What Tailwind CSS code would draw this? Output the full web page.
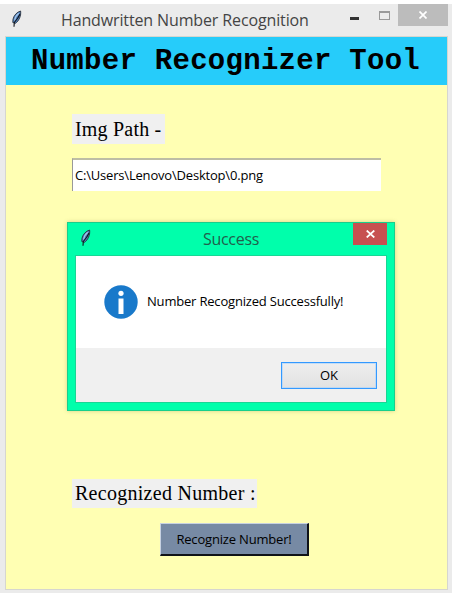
<!DOCTYPE html>
<html lang="en">
<head>
<meta charset="utf-8">
<title>Handwritten Number Recognition</title>
<script src="https://cdn.jsdelivr.net/npm/@tailwindcss/browser@4"></script>
</head>
<body class="h-[593px] w-[452px] overflow-hidden bg-white pt-1 font-['Open_Sans','Noto_Sans',sans-serif]">
<svg class="hidden">
  <symbol id="feather" viewBox="0 0 12 18">
    <path d="M9.600 1C6 2 2.800 5.500 2 9.200L1.800 12.500 4.500 13.300C7.800 11 10.300 6 9.600 1Z" fill="#4f80bd" stroke="#29303b" stroke-width=".9"/>
    <path d="M7.800 3.200C5.500 5 4 7.800 3.600 10.500" fill="none" stroke="#a5c6ea" stroke-width="1.200"/>
    <path d="M9 4C7.500 7.500 5.500 10 3.300 12.500L3 16.800" fill="none" stroke="#101319" stroke-width="1.100"/>
  </symbol>
</svg>
<main class="relative flex h-[589px] flex-col bg-[#ebebeb] pr-[5px] pb-1 pl-[6px]">
  <header class="flex h-[33px] shrink-0 items-start">
    <svg class="mt-[6px] ml-[5px] h-[18px] w-3"><use href="#feather"/></svg>
    <h1 class="mt-1 ml-[38px] w-[248px] text-[16px] leading-6 tracking-[-0.130px] whitespace-nowrap text-[#444]">Handwritten Number Recognition</h1>
    <span class="mt-[13px] ml-[41px] h-[3px] w-[9px] bg-[#333]"></span>
    <span class="mt-[7px] ml-[20px] h-[9px] w-[11px] border border-t-2 border-[#999]"></span>
    <button class="-mr-px ml-auto flex h-[22px] w-[50px] items-center justify-center bg-[#bcbcbc]">
      <svg class="h-2 w-2" viewBox="0 0 8 8"><path d="M.5.5l7 7m0-7l-7 7" stroke="#fff" stroke-width="1.700"/></svg>
    </button>
  </header>
  <section class="flex min-h-0 grow flex-col bg-[#ffffb3] shadow-[0_0_0_1px_#d6d6cf]">
    <h2 class="h-[48px] shrink-0 bg-[#26ccfa] pt-px pl-[25px] font-['Courier_New','Liberation_Mono',monospace] text-[29px] leading-[48px] font-bold tracking-[0.280px] whitespace-nowrap text-black">Number Recognizer Tool</h2>
    <div class="flex flex-col items-start pl-[66px]">
      <label class="mt-[29px] h-[30px] w-[93px] bg-[#f0f0f0] pl-[3px] font-['Liberation_Serif',serif] text-[20px] leading-[30px] tracking-[0.200px] whitespace-nowrap">Img Path -</label>
      <div class="mt-[14px] h-[33px] w-[309px] border-t-2 border-l border-t-[#bdbda5] border-l-[#999] bg-white pl-[2px] text-[13px] leading-[30px] tracking-[-0.190px] whitespace-nowrap"><span>C:\Users\Lenovo\Desktop\0.png</span></div>
      <label class="mt-[288px] h-[29px] w-[185px] bg-[#f0f0f0] pl-[3px] font-['Liberation_Serif',serif] text-[20px] leading-[29px] tracking-[0.280px] whitespace-nowrap">Recognized Number :</label>
      <button class="mt-[15px] ml-[88px] h-[33px] w-[149px] border-t border-r-2 border-b-2 border-l border-t-[#c6d1e1] border-r-[#101318] border-b-[#101318] border-l-[#c6d1e1] bg-[#778aa4] text-[13px] leading-[30px] tracking-[-0.180px] whitespace-nowrap"><span>Recognize Number!</span></button>
    </div>
  </section>
  <div role="dialog" class="absolute top-[218px] left-[67px] flex h-[189px] w-[328px] flex-col border border-[#18cf8c] bg-[#00ffab] px-[7px] pb-[7px] shadow-[0_0_4px_rgba(100,100,40,.3)]">
    <div class="flex h-[32px] shrink-0 items-start">
      <svg class="mt-[6px] ml-[5px] h-[18px] w-3"><use href="#feather"/></svg>
      <h3 class="mt-1 ml-[111px] w-[56px] text-[16px] leading-6 tracking-[-0.300px] whitespace-nowrap text-[#21604c]">Success</h3>
      <button class="ml-auto flex h-[22px] w-[34px] items-center justify-center bg-[#c75050]">
        <svg class="h-2 w-[9px]" viewBox="0 0 9 8"><path d="M.7.5l7.600 7m0-7l-7.600 7" stroke="#fff" stroke-width="1.700"/></svg>
      </button>
    </div>
    <div class="flex min-h-0 grow flex-col border border-[#19d695] bg-white">
      <div class="flex h-[92px] shrink-0 items-center pl-[28px]">
        <svg class="h-[34px] w-[34px]" viewBox="0 0 34 34"><circle cx="17" cy="17" r="16.700" fill="#1979ca"/><circle cx="17" cy="8.300" r="2.600" fill="#fff"/><path d="M14.500 13.500h5V29h-5z" fill="#fff"/></svg>
        <p class="ml-[9px] text-[13px] tracking-[-0.190px] whitespace-nowrap"><span>Number Recognized Successfully!</span></p>
      </div>
      <div class="flex grow items-start justify-end bg-[#f0f0f0] pt-[14px] pr-[9px]">
        <button class="h-[27px] w-[96px] border border-[#3399ff] bg-linear-to-b from-[#eee] to-[#e2e2e2] text-[13px] leading-[25px] outline-1 -outline-offset-2 outline-[#a9d2fc]/60">OK</button>
      </div>
    </div>
  </div>
</main>
</body>
</html>
